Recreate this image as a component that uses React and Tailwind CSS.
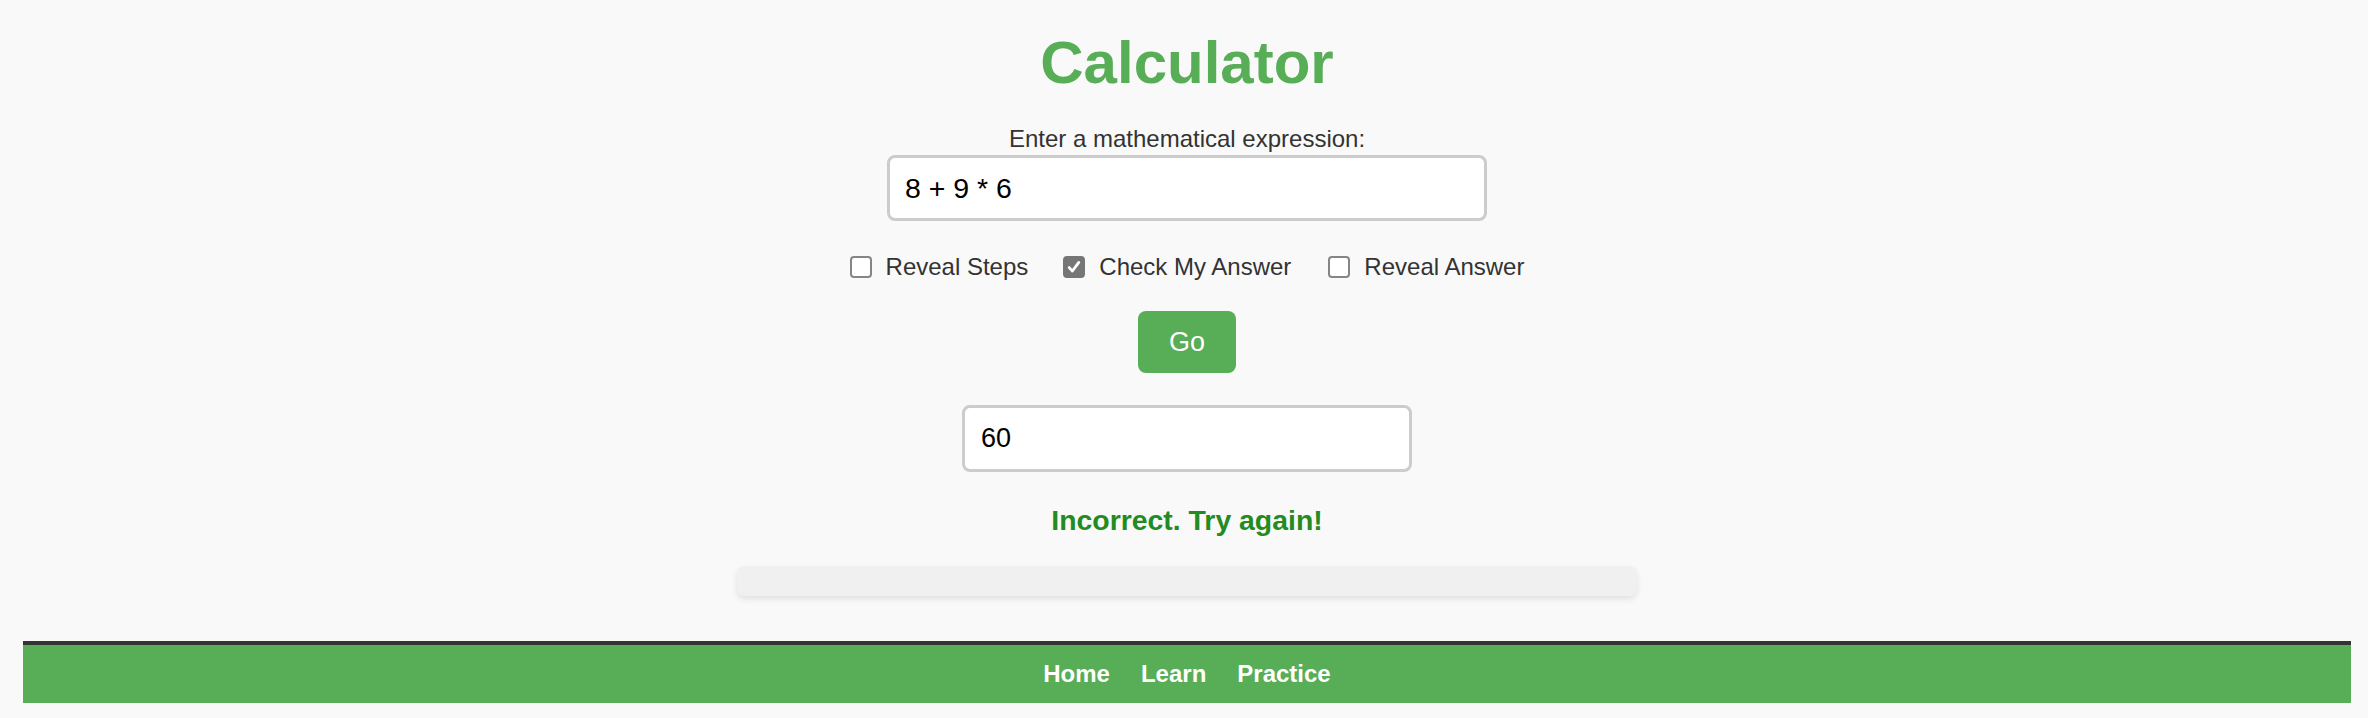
import React, { useState } from 'react';

const Checkbox = ({ label, checked, onChange }) => (
    <label className="flex items-center gap-[14px] cursor-pointer select-none">
        <span
            onClick={onChange}
            className={`flex items-center justify-center w-[22px] h-[22px] rounded-[4px] border-2 ${checked ? 'bg-[#767676] border-[#767676]' : 'bg-white border-[#858585]'}`}
        >
            {checked && (
                <svg viewBox="0 0 16 16" className="w-[16px] h-[16px]">
                    <path d="M3.2 8.6 L6.4 12 L12.8 3.4" fill="none" stroke="white" strokeWidth="2.8" strokeLinecap="round" strokeLinejoin="round" />
                </svg>
            )}
        </span>
        <span className="text-[24px] leading-[28px] text-[#333]">{label}</span>
    </label>
);

const App = () => {
    const [expression, setExpression] = useState('8 + 9 * 6');
    const [answer, setAnswer] = useState('60');
    const [opts, setOpts] = useState({ steps: false, check: true, reveal: false });

    const toggle = (key) => setOpts(o => ({ ...o, [key]: !o[key] }));

    return (
        <div className="min-h-[718px] bg-[#f9f9f9] font-['Liberation_Sans',Arial,sans-serif] overflow-hidden">
            <div className="ml-[23px] w-[2328px] flex flex-col items-center">
                <h1 className="mt-[28px] text-[60px] leading-[69px] font-bold text-[#58ad57]">Calculator</h1>

                <label className="mt-[28px] text-[24px] leading-[28px] text-[#333]">Enter a mathematical expression:</label>
                <input
                    type="text"
                    value={expression}
                    onChange={(e) => setExpression(e.target.value)}
                    className="mt-[2px] w-[600px] h-[66px] px-[15px] bg-white border-[3px] border-[#cccccc] rounded-[8px] text-[28.5px] text-black outline-none"
                />

                {/* options */}
                <div className="mt-[32px] flex items-center">
                    <Checkbox label="Reveal Steps" checked={opts.steps} onChange={() => toggle('steps')} />
                    <div className="w-[35px]" />
                    <Checkbox label="Check My Answer" checked={opts.check} onChange={() => toggle('check')} />
                    <div className="w-[37px]" />
                    <Checkbox label="Reveal Answer" checked={opts.reveal} onChange={() => toggle('reveal')} />
                </div>

                <button className="mt-[30px] w-[98px] h-[62px] rounded-[8px] bg-[#58ad57] text-white text-[27px]">Go</button>

                <input
                    type="text"
                    value={answer}
                    onChange={(e) => setAnswer(e.target.value)}
                    className="mt-[32px] w-[450px] h-[67px] px-[16px] bg-white border-[3px] border-[#cccccc] rounded-[8px] text-[27px] text-black outline-none"
                />

                <p className="mt-[32px] text-[28.4px] leading-[32px] font-bold text-[#228b22]">Incorrect. Try again!</p>

                <div className="mt-[30px] w-[900px] h-[30px] bg-[#f0f0f0] rounded-[8px] shadow-[0_3px_6px_rgba(0,0,0,0.1)]" />
            </div>

            <footer className="mt-[45px] ml-[23px] w-[2328px] h-[62px] border-t-4 border-[#333] bg-[#58ad57] flex items-center justify-center gap-[31px]">
                <a href="#" className="text-[24px] font-bold text-white">Home</a>
                <a href="#" className="text-[24px] font-bold text-white">Learn</a>
                <a href="#" className="text-[24px] font-bold text-white">Practice</a>
            </footer>
        </div>
    );
};

export default App;
